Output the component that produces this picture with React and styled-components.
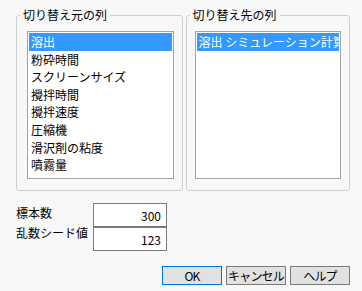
import React from "react";
import styled, { createGlobalStyle } from "styled-components";

const Global = createGlobalStyle`
  html, body { margin: 0; padding: 0; background: #f8f8f8; }
  body { font-family: "Noto Sans CJK JP", "Noto Sans", sans-serif; font-size: 12px; color: #000; }
`;

const Dialog = styled.div`
  width: 362px;
  height: 291px;
  box-sizing: border-box;
  padding: 7px 12px 0 16px;
  display: flex;
  flex-direction: column;
`;

const GroupRow = styled.div`
  display: flex;
  gap: 3px;
`;

const Group = styled.fieldset`
  margin: 0;
  padding: 0;
  width: ${(p) => p.$w}px;
  box-sizing: border-box;
  border: 1px solid #cfcfcf;
  border-radius: 3px;
  min-width: 0;
`;

const Legend = styled.legend`
  margin-left: 3px;
  padding: 0 3px;
  font-size: 12px;
  line-height: 16px;
`;

const ListBox = styled.div`
  margin: 8px 8px 11px ${(p) => p.$ml}px;
  height: 148px;
  box-sizing: border-box;
  border: 1px solid #a3a3a3;
  background: #fff;
  padding: 1px 1px;
  overflow: hidden;
`;

const Item = styled.div`
  height: 17.6px;
  line-height: 17px;
  padding-left: 2px;
  white-space: nowrap;
  overflow: hidden;
  background: ${(p) => (p.$sel ? "#3399ff" : "transparent")};
  color: ${(p) => (p.$sel ? "#fff" : "#000")};
`;

const Fields = styled.div`
  margin-top: 12px;
  display: grid;
  grid-template-columns: 77px 74px;
  align-items: start;
`;

const Labels = styled.div`
  display: flex;
  flex-direction: column;
  line-height: 20px;
`;

const Inputs = styled.div`
  display: flex;
  flex-direction: column;
`;

const NumBox = styled.input`
  width: 74px;
  height: 24px;
  box-sizing: border-box;
  border: 1px solid #7a7a7a;
  background: #fff;
  text-align: right;
  padding: 0 5px 0 0;
  margin: 0;
  font-family: inherit;
  font-size: 12px;
  color: #000;
  outline: none;
`;

const Buttons = styled.div`
  margin-top: 15px;
  display: flex;
  justify-content: flex-end;
  gap: 4px;
`;

const Button = styled.button`
  width: 60px;
  height: 19px;
  box-sizing: border-box;
  margin: 0;
  padding: 0;
  background: #e1e1e1;
  border: 1px solid ${(p) => (p.$primary ? "#0078d7" : "#7a7a7a")};
  font-family: inherit;
  font-size: 12px;
  line-height: 16px;
  letter-spacing: -0.8px;
  white-space: nowrap;
  color: #000;
`;

const sourceCols = [
  "溶出",
  "粉砕時間",
  "スクリーンサイズ",
  "攪拌時間",
  "攪拌速度",
  "圧縮機",
  "滑沢剤の粘度",
  "噴霧量",
];

export default function App() {
  return (
    <>
      <Global />
      <Dialog>
        <GroupRow>
          <Group $w={167}>
            <Legend>切り替え元の列</Legend>
            <ListBox $ml={10}>
              {sourceCols.map((c, i) => (
                <Item key={c} $sel={i === 0}>
                  {c}
                </Item>
              ))}
            </ListBox>
          </Group>
          <Group $w={165}>
            <Legend>切り替え先の列</Legend>
            <ListBox $ml={8}>
              <Item $sel>溶出 シミュレーション計算</Item>
            </ListBox>
          </Group>
        </GroupRow>
        <Fields>
          <Labels>
            <span>標本数</span>
            <span>乱数シード値</span>
          </Labels>
          <Inputs>
            <NumBox readOnly value="300" />
            <NumBox readOnly value="123" />
          </Inputs>
        </Fields>
        <Buttons>
          <Button $primary>OK</Button>
          <Button>キャンセル</Button>
          <Button>ヘルプ</Button>
        </Buttons>
      </Dialog>
    </>
  );
}
